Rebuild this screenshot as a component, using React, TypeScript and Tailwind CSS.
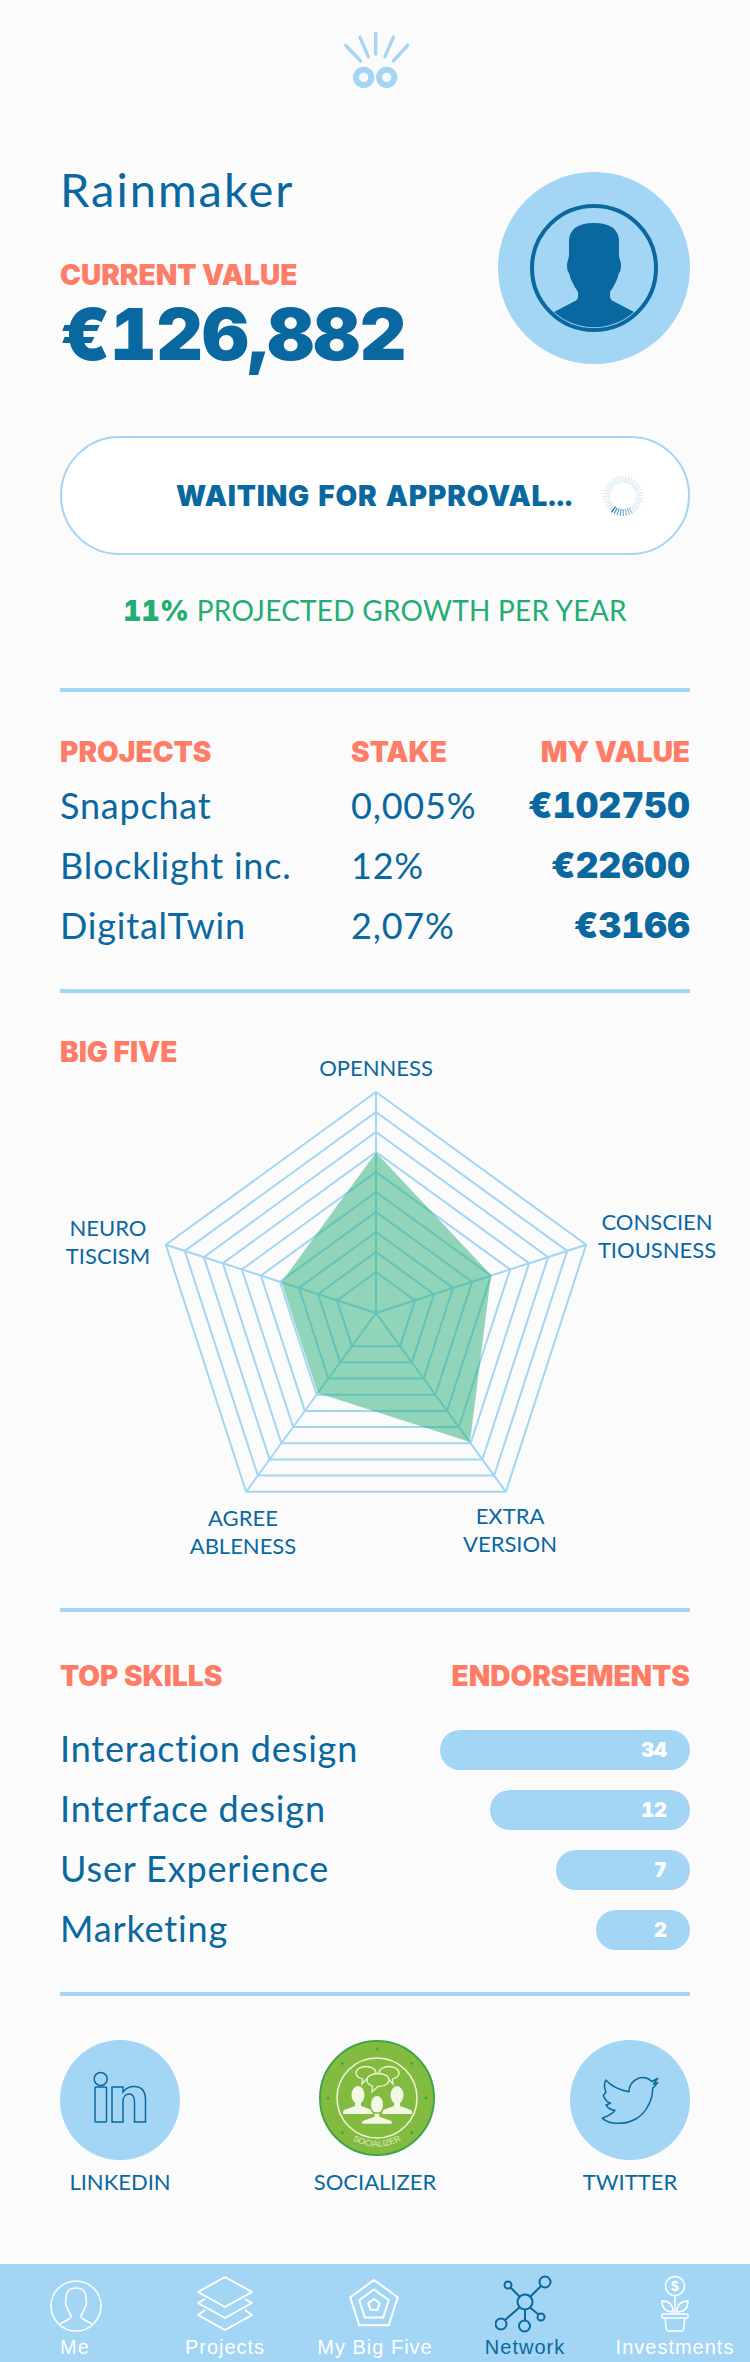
import React from "react";

const BLUE = "#0a68a0";
const LIGHT = "#a3d5f4";

const HEAVY = "font-['Inter',sans-serif] font-black tabular-nums";
const LABEL = "font-['Inter',sans-serif] font-black text-[28px] leading-[24px] text-[#ff7c66]";

const skills = [
  { name: "Interaction design", count: 34, width: "w-[250px]" },
  { name: "Interface design", count: 12, width: "w-[200px]" },
  { name: "User Experience", count: 7, width: "w-[134px]" },
  { name: "Marketing", count: 2, width: "w-[94px]" },
];

const projects = [
  { name: "Snapchat", stake: "0,005%", value: "€102750" },
  { name: "Blocklight inc.", stake: "12%", value: "€22600" },
  { name: "DigitalTwin", stake: "2,07%", value: "€3166" },
];

// pentagon corners, first one pointing up
const corner = (cx: number, cy: number, r: number, i: number) => {
  const a = (-90 + i * 72) * (Math.PI / 180);
  return [cx + r * Math.cos(a), cy + r * Math.sin(a)];
};
const pentagon = (cx: number, cy: number, r: number) =>
  [0, 1, 2, 3, 4].map((i) => corner(cx, cy, r, i).join(",")).join(" ");

const Logo = () => (
  <svg width="150" height="80" viewBox="0 0 450 240" className="mx-auto">
    <g stroke={LIGHT} strokeWidth="10" strokeLinecap="round" fill="none">
      <path d="M227 40V102" />
      <path d="M180 52L205 110" />
      <path d="M280 52L255 110" />
      <path d="M137 76L182 123" />
      <path d="M323 76L280 123" />
      <circle cx="191" cy="172" r="23" strokeWidth="18" />
      <circle cx="260" cy="172" r="23" strokeWidth="18" />
    </g>
  </svg>
);

const Avatar = () => (
  <div className="w-[192px] h-[192px] rounded-full bg-[#a3d5f4] flex items-center justify-center">
    <svg width="128" height="128" viewBox="0 0 128 128">
      <circle cx="64" cy="64" r="62" fill="none" stroke={BLUE} strokeWidth="4" />
      <path
        fill={BLUE}
        d="M24 108L45 97Q48 95.500 48 92V88Q41 78 39 69Q37 68 37 60L39 52V38Q39 19 64 19Q89 19 89 38V52L91 60Q91 68 89 69Q87 78 80 88V92Q80 95.500 83 97L104 108A60 60 0 0 1 24 108Z"
      />
    </svg>
  </div>
);

const Spinner = () => (
  <svg width="44" height="44" viewBox="-22 -22 44 44">
    {Array.from({ length: 40 }).map((_, i) => {
      const a = ((215 - i * 9) * Math.PI) / 180;
      const op = i === 0 ? 1 : i < 8 ? 0.75 - i * 0.05 : 0.3;
      return (
        <line
          key={i}
          x1={Math.sin(a) * 13}
          y1={-Math.cos(a) * 13}
          x2={Math.sin(a) * 20}
          y2={-Math.cos(a) * 20}
          stroke={i < 8 ? BLUE : "#7fb9dc"}
          strokeWidth="1.200"
          opacity={op}
        />
      );
    })}
  </svg>
);

const Radar = () => {
  const cx = 376;
  const cy = 320;
  const rings = [221, 201, 181, 161, 141, 121, 101, 81, 61, 41];
  return (
    <svg className="absolute inset-0" width="750" height="615" viewBox="0 0 750 615">
      <g fill="none" stroke={LIGHT} strokeWidth="2">
        {rings.map((r) => (
          <polygon key={r} points={pentagon(cx, cy, r)} />
        ))}
        {[0, 1, 2, 3, 4].map((i) => {
          const [x, y] = corner(cx, cy, 221, i);
          return <line key={i} x1={cx} y1={cy} x2={x} y2={y} />;
        })}
      </g>
      <polygon
        points="376,159.500 491,282 470,449 317.700,400 281.500,289"
        fill="#25b07a"
        fillOpacity="0.5"
      />
    </svg>
  );
};

const RadarLabel = ({ className, lines }: { className: string; lines: string[] }) => (
  <div className={`absolute -translate-x-1/2 text-center text-[22px] leading-[28px] text-[#0a68a0] whitespace-nowrap ${className}`}>
    {lines.map((l) => (
      <div key={l}>{l}</div>
    ))}
  </div>
);

const LinkedinIcon = () => (
  <svg width="120" height="120" viewBox="0 0 120 120" fill="none" stroke={BLUE} strokeWidth="1.500">
    <circle cx="40.700" cy="39" r="6.500" />
    <rect x="35" y="47" width="11.500" height="35" rx="1" />
    <path d="M52 47H63V52C66 48 70 46.500 74 46.500C82 46.500 85.500 52 85.500 60V82H74.500V62C74.500 56 72 54 69 54C65.500 54 63 57 63 62V82H52Z" />
  </svg>
);

const TwitterIcon = () => (
  <svg width="120" height="120" viewBox="0 0 120 120" fill="none" stroke={BLUE} strokeWidth="1.500" strokeLinejoin="round">
    <path d="M87.700 38.500L81.700 41.500C78 37 72 37 68 38.500C62 41 59 46 59 51.700C50 50 41 46 35.700 40C34 44 34 48 36 52L33.300 55.500C35 60 37 62 40.500 63.300L36 65C38 68 41 70 45 70.500C43 73 38 76 32.300 78.300C37 82 42 83.500 48 83.300C60 83.500 72 78 78 66C81.500 60 82.700 54 82.700 48.300L87.700 42.700L83.500 44Z" />
  </svg>
);

const Person = ({ x, y, s = 1 }: { x: number; y: number; s?: number }) => (
  <g transform={`translate(${x} ${y}) scale(${s})`} fill="#f3f7e6">
    <ellipse cx="0" cy="-9" rx="6.500" ry="9" />
    <path d="M-3 -1H3V2L14 6Q15 7 15 10H-15Q-15 7 -14 6L-3 2Z" />
  </g>
);

const SocializerBadge = () => (
  <svg width="116" height="116" viewBox="0 0 116 116">
    <circle cx="58" cy="58" r="57" fill="#83bb41" stroke="#3fa648" strokeWidth="2" />
    <circle cx="58" cy="58" r="40" fill="none" stroke="#eef4d8" strokeWidth="1.500" />
    {[0, 45, 90, 135, 225, 270, 315].map((d) => (
      <circle
        key={d}
        cx={58 + Math.sin((d * Math.PI) / 180) * 49}
        cy={58 - Math.cos((d * Math.PI) / 180) * 49}
        r="1.500"
        fill="#3fa648"
      />
    ))}
    <g fill="#83bb41" stroke="#eef4d8" strokeWidth="1.300">
      <path d="M37 33C37 29 42 26.500 47 26.500C52 26.500 57 29 57 33C57 37 52 39.500 47 39.500L43 44L43.500 39C40 38 37 36 37 33Z" />
      <path d="M80 33C80 29 75 26.500 70 26.500C65 26.500 60 29 60 33C60 37 65 39.500 70 39.500L74 44L73.500 39C77 38 80 36 80 33Z" />
      <path d="M48 40C48 36 53 33.500 59 33.500C65 33.500 70 36 70 40C70 44 65 46.500 59 46.500L53 52L53.500 46C50 45 48 43 48 40Z" />
    </g>
    <Person x={39} y={64} />
    <Person x={78} y={64} />
    <g stroke="#83bb41" strokeWidth="1.500">
      <Person x={58} y={74} s={1.050} />
    </g>
    <path id="badge-arc" d="M13 77A49 49 0 0 0 103 77" fill="none" />
    <text fontSize="8.500" fill="#dfeec0" fontFamily="Liberation Sans, sans-serif">
      <textPath href="#badge-arc" startOffset="50%" textAnchor="middle">
        SOCIALIZER
      </textPath>
    </text>
  </svg>
);

const MeIcon = () => (
  <svg width="60" height="60" viewBox="0 0 60 60" fill="none" stroke="#fff" strokeWidth="1.500">
    <circle cx="31" cy="32" r="25" />
    <path d="M15 50L25 44.500Q26.500 43.500 26 41.500Q23 37 22 33Q20.500 32 20.500 29L21 26Q20.500 14 31 14Q41.500 14 41 26L41.500 29Q41.500 32 40 33Q39 37 36 41.500Q35.500 43.500 37 44.500L47 50" />
  </svg>
);

const ProjectsIcon = () => (
  <svg width="60" height="60" viewBox="0 0 60 60" fill="none" stroke="#fff" strokeWidth="2" strokeLinejoin="round">
    <path d="M3 18L30 3L57 18L30 33Z" />
    <path d="M10 25L3 29L30 44L57 29L50 25" />
    <path d="M10 36L3 41L30 56L57 41L50 36" />
  </svg>
);

const BigFiveIcon = () => (
  <svg width="60" height="60" viewBox="0 0 60 60" fill="none" stroke="#fff" strokeWidth="2">
    <polygon points={pentagon(29, 31, 25)} />
    <polygon points={pentagon(29, 31, 15.5)} />
    <polygon points={pentagon(29, 31, 6)} />
  </svg>
);

const NetworkIcon = () => (
  <svg width="60" height="60" viewBox="0 0 60 60" fill="none" stroke={BLUE} strokeWidth="2">
    <circle cx="30" cy="28" r="7.500" />
    <circle cx="50" cy="8" r="5.500" />
    <circle cx="13" cy="11" r="3.500" />
    <circle cx="46" cy="43" r="3.500" />
    <circle cx="6" cy="50" r="5.500" />
    <circle cx="29.500" cy="52" r="5.500" />
    <path d="M35.500 22.500L46 12M25 23L15.500 13.500M35 33.500L43.500 40.500M24.700 33.300L10 46M30 35.500V46.500" />
  </svg>
);

const InvestmentsIcon = () => (
  <svg width="60" height="60" viewBox="0 0 60 60" fill="none" stroke="#fff" strokeWidth="1.500">
    <circle cx="30" cy="12" r="9.500" />
    <text x="30" y="17" textAnchor="middle" fontSize="14" fontWeight="700" fill="#fff" stroke="none" fontFamily="Liberation Sans, sans-serif">
      $
    </text>
    <path d="M30 22V40" />
    <path d="M28 38C20 38 17 33 17 27C24 27 28 31 28 38Z" />
    <path d="M32 38C40 38 43 33 43 27C36 27 32 31 32 38Z" />
    <rect x="17" y="40" width="26" height="4" rx="1" />
    <path d="M20 44L21.500 55.500Q22 57 23.500 57H36.500Q38 57 38.500 55.500L40 44" />
  </svg>
);

const tabs = [
  { label: "Me", icon: <MeIcon /> },
  { label: "Projects", icon: <ProjectsIcon /> },
  { label: "My Big Five", icon: <BigFiveIcon /> },
  { label: "Network", icon: <NetworkIcon />, active: true },
  { label: "Investments", icon: <InvestmentsIcon /> },
];

const Rule = ({ className }: { className: string }) => (
  <div className={`h-[4px] mx-[60px] bg-[#a3d5f4] ${className}`} />
);

const App: React.FC = () => {
  return (
    <div className="w-[750px] min-h-[2362px] flex flex-col bg-[#fbfbfb] font-['Lato',sans-serif] text-[#0a68a0]">
      <div className="pt-[20px]">
        <Logo />
      </div>

      <div className="mt-[72px] px-[60px] flex justify-between items-start">
        <div>
          <h1 className="text-[47px] leading-[34px] tracking-[2px] font-normal">Rainmaker</h1>
          <div className={`mt-[57px] ${LABEL}`}>CURRENT VALUE</div>
          <div className={`mt-[17px] text-[72px] leading-[60px] tracking-[-0.300px] ${HEAVY}`}>€126,882</div>
        </div>
        <Avatar />
      </div>

      <div className="mt-[72px] mx-[60px] h-[119px] rounded-full border-2 border-[#a3d5f4] bg-white pl-[114px] flex items-center">
        <div className={`w-[425px] text-[28px] tracking-[0.800px] whitespace-nowrap ${HEAVY}`}>WAITING FOR APPROVAL...</div>
        <Spinner />
      </div>

      <div className="mt-[40px] h-[30px] text-center text-[28px] leading-[30px] tracking-[0.250px] text-[#22ae73]">
        <span className={HEAVY}>11%</span> PROJECTED GROWTH PER YEAR
      </div>

      <Rule className="mt-[63px]" />

      <div className="mt-[48px] mx-[60px] grid grid-cols-[291px_1fr_auto] items-center">
        <div className={LABEL}>PROJECTS</div>
        <div className={LABEL}>STAKE</div>
        <div className={`text-right ${LABEL}`}>MY VALUE</div>
        <div className="col-span-3 h-[11px]" />
        {projects.map((p) => (
          <React.Fragment key={p.name}>
            <div className="text-[36px] leading-[60px] tracking-[0.800px]">{p.name}</div>
            <div className="text-[36px] leading-[60px] tracking-[0.800px]">{p.stake}</div>
            <div className={`text-[35px] leading-[60px] tracking-[0.300px] text-right ${HEAVY}`}>{p.value}</div>
          </React.Fragment>
        ))}
      </div>

      <Rule className="mt-[34px]" />

      <div className="relative h-[615px] px-[60px] pt-[47px]">
        <div className={`relative z-10 ${LABEL}`}>BIG FIVE</div>
        <Radar />
        <RadarLabel className="left-[376px] top-[61px]" lines={["OPENNESS"]} />
        <RadarLabel className="left-[657px] top-[215px]" lines={["CONSCIEN", "TIOUSNESS"]} />
        <RadarLabel className="left-[108px] top-[221px]" lines={["NEURO", "TISCISM"]} />
        <RadarLabel className="left-[243px] top-[511px]" lines={["AGREE", "ABLENESS"]} />
        <RadarLabel className="left-[510px] top-[509px]" lines={["EXTRA", "VERSION"]} />
      </div>

      <Rule className="" />

      <div className={`mt-[52px] mx-[60px] flex justify-between ${LABEL}`}>
        <div>TOP SKILLS</div>
        <div>ENDORSEMENTS</div>
      </div>

      <div className="mt-[42px] mx-[60px] flex flex-col gap-[20px]">
        {skills.map((s) => (
          <div key={s.name} className="flex justify-between items-start h-[40px]">
            <div className="text-[36px] leading-[36px] tracking-[0.850px]">{s.name}</div>
            <div className={`${s.width} h-[40px] rounded-full bg-[#a3d5f4] text-white text-[20px] flex items-center justify-end pr-[23px] ${HEAVY}`}>
              {s.count}
            </div>
          </div>
        ))}
      </div>

      <Rule className="mt-[42px]" />

      <div className="mt-[44px] mx-[60px] flex justify-between">
        <div className="w-[120px] flex flex-col items-center">
          <div className="w-[120px] h-[120px] rounded-full bg-[#a3d5f4]">
            <LinkedinIcon />
          </div>
          <div className="mt-[8px] text-[22px] leading-[28px]">LINKEDIN</div>
        </div>
        <div className="w-[120px] flex flex-col items-center">
          <div className="w-[120px] h-[120px] flex justify-center pl-[3px]">
            <SocializerBadge />
          </div>
          <div className="mt-[8px] text-[22px] leading-[28px]">SOCIALIZER</div>
        </div>
        <div className="w-[120px] flex flex-col items-center">
          <div className="w-[120px] h-[120px] rounded-full bg-[#a3d5f4]">
            <TwitterIcon />
          </div>
          <div className="mt-[8px] text-[22px] leading-[28px]">TWITTER</div>
        </div>
      </div>

      <div className="mt-auto h-[98px] bg-[#a3d5f4] grid grid-cols-5 font-['Liberation_Sans',sans-serif]">
        {tabs.map((t) => (
          <div key={t.label} className="flex flex-col items-center pt-[10px]">
            {t.icon}
            <div className={`mt-[1px] text-[20px] leading-[24px] tracking-[1px] whitespace-nowrap ${t.active ? "text-[#0a68a0]" : "text-white"}`}>
              {t.label}
            </div>
          </div>
        ))}
      </div>
    </div>
  );
};

export default App;
